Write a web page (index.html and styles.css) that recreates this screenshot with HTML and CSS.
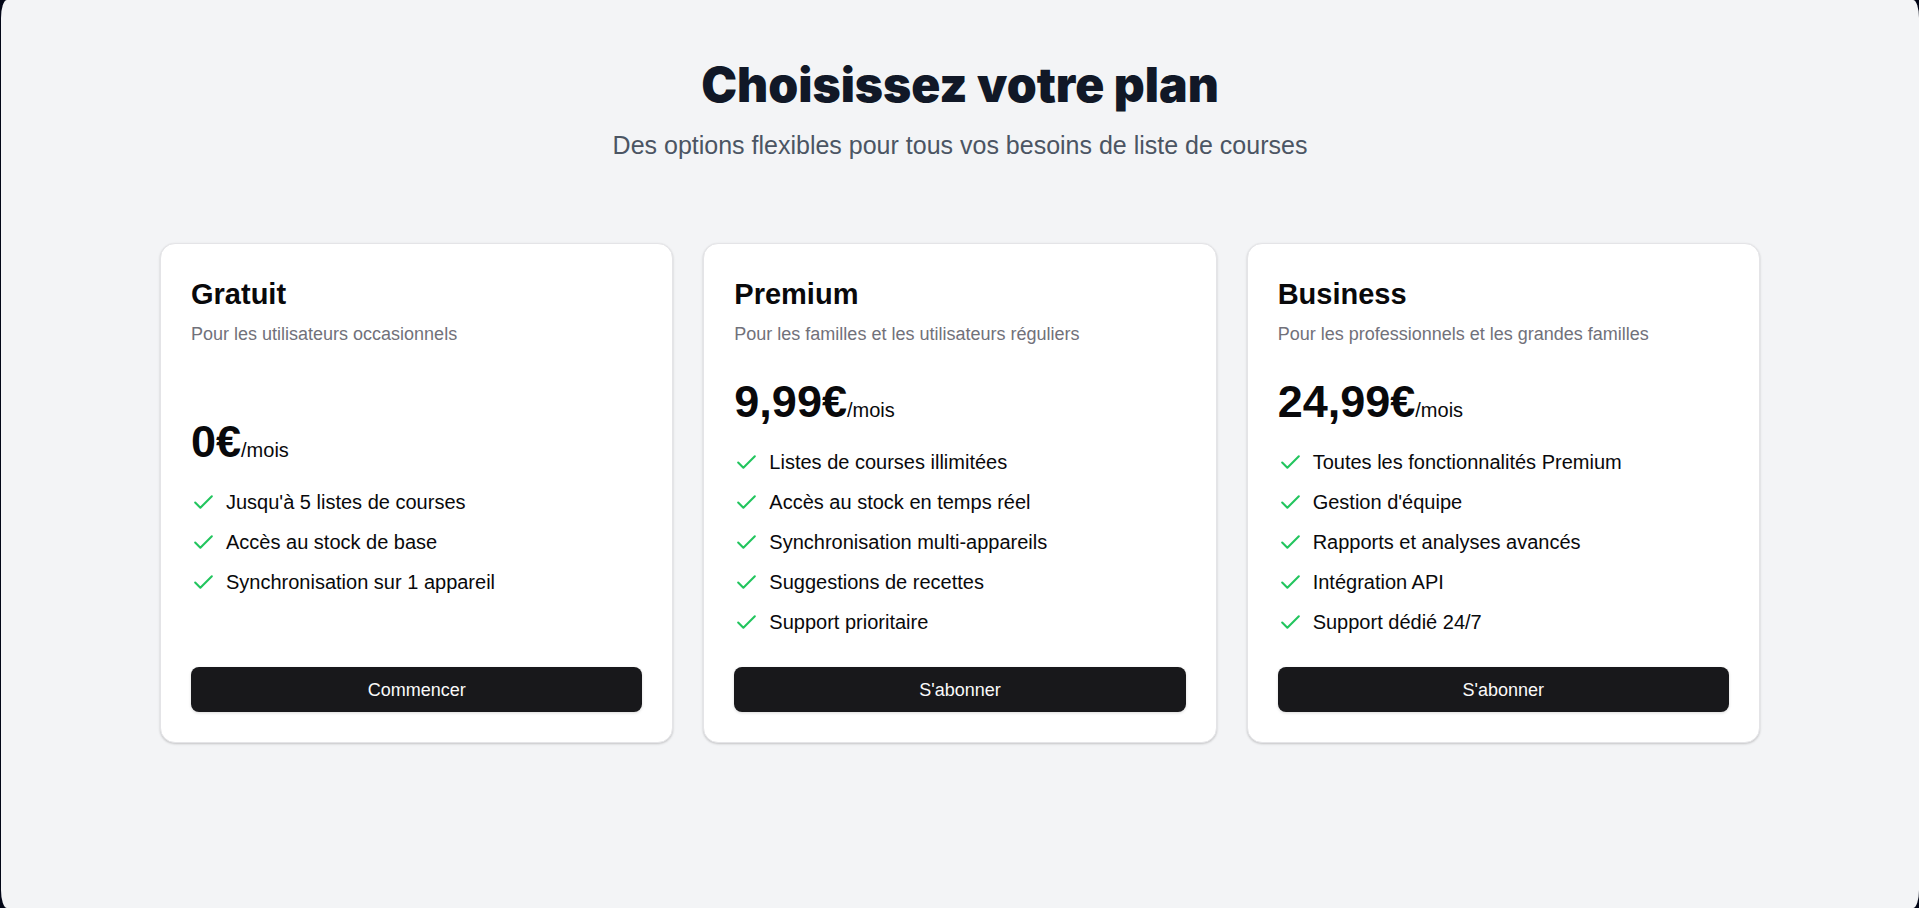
FILE: index.html
```html
<!DOCTYPE html>
<html lang="fr">
<head>
<meta charset="utf-8">
<meta name="viewport" content="width=device-width, initial-scale=1">
<title>Choisissez votre plan</title>
<link rel="stylesheet" href="styles.css">
</head>
<body>
<svg class="sprite" aria-hidden="true"><symbol id="check" viewBox="0 0 24 24"><path d="M20 6 9 17l-5-5"/></symbol></svg>
<main class="page">
  <div class="container">
    <header class="intro">
      <h1 class="title">Choisissez votre plan</h1>
      <p class="subtitle">Des options flexibles pour tous vos besoins de liste de courses</p>
    </header>
    <div class="plans">
      <section class="card">
        <div class="card-head"><h2 class="name">Gratuit</h2><p class="desc">Pour les utilisateurs occasionnels</p></div>
        <div class="card-body">
          <p class="price"><span class="amount">0€</span><span>/mois</span></p>
          <ul class="features">
            <li><svg class="icon"><use href="#check"/></svg>Jusqu'à 5 listes de courses</li>
            <li><svg class="icon"><use href="#check"/></svg>Accès au stock de base</li>
            <li><svg class="icon"><use href="#check"/></svg>Synchronisation sur 1 appareil</li>
          </ul>
        </div>
        <button class="button" type="button">Commencer</button>
      </section>
      <section class="card">
        <div class="card-head"><h2 class="name">Premium</h2><p class="desc">Pour les familles et les utilisateurs réguliers</p></div>
        <div class="card-body">
          <p class="price"><span class="amount">9,99€</span><span>/mois</span></p>
          <ul class="features">
            <li><svg class="icon"><use href="#check"/></svg>Listes de courses illimitées</li>
            <li><svg class="icon"><use href="#check"/></svg>Accès au stock en temps réel</li>
            <li><svg class="icon"><use href="#check"/></svg>Synchronisation multi-appareils</li>
            <li><svg class="icon"><use href="#check"/></svg>Suggestions de recettes</li>
            <li><svg class="icon"><use href="#check"/></svg>Support prioritaire</li>
          </ul>
        </div>
        <button class="button" type="button">S'abonner</button>
      </section>
      <section class="card">
        <div class="card-head"><h2 class="name">Business</h2><p class="desc">Pour les professionnels et les grandes familles</p></div>
        <div class="card-body">
          <p class="price"><span class="amount">24,99€</span><span>/mois</span></p>
          <ul class="features">
            <li><svg class="icon"><use href="#check"/></svg>Toutes les fonctionnalités Premium</li>
            <li><svg class="icon"><use href="#check"/></svg>Gestion d'équipe</li>
            <li><svg class="icon"><use href="#check"/></svg>Rapports et analyses avancés</li>
            <li><svg class="icon"><use href="#check"/></svg>Intégration API</li>
            <li><svg class="icon"><use href="#check"/></svg>Support dédié 24/7</li>
          </ul>
        </div>
        <button class="button" type="button">S'abonner</button>
      </section>
    </div>
  </div>
</main>
</body>
</html>
```
FILE: styles.css
```css
* { box-sizing: border-box; margin: 0; padding: 0; }
html { background: #020617; }
body { font-family: "Liberation Sans", Arial, sans-serif; font-size: 20px; line-height: 30px; color: #09090b; }
.sprite { display: none; }
.page { min-height: 100vh; margin-left: 1px; padding: 60px 40px; background: #f3f4f6; border-radius: 6px / 18px; }
.container { max-width: 1600px; margin: 0 auto; }
.intro { text-align: center; margin-bottom: 80px; }
.title { font-family: "Arial Black", Inter, sans-serif; font-weight: 900; font-size: 48px; line-height: 50px; color: #111827; }
.subtitle { margin-top: 18px; font-size: 25px; line-height: 35px; color: #4b5563; }
.plans { display: grid; grid-template-columns: repeat(3, 1fr); gap: 30px; }
.card { display: flex; flex-direction: column; justify-content: space-between; padding: 30px; background: #fff; border: 1px solid #e4e4e7; border-radius: 15px; box-shadow: 0 1px 3px rgba(0, 0, 0, 0.1), 0 1px 2px rgba(0, 0, 0, 0.1); }
.name { font-size: 29px; line-height: 40px; }
.desc { margin-top: 8px; font-size: 18px; line-height: 25px; color: #71717a; }
.card-body { margin: 30px 0; }
.amount { font-size: 45px; line-height: 50px; font-weight: 700; }
.features { list-style: none; display: grid; gap: 10px; margin-top: 20px; }
.features li { display: flex; align-items: center; gap: 10px; }
.icon { width: 25px; height: 25px; fill: none; stroke: #22c55e; stroke-width: 2; stroke-linecap: round; stroke-linejoin: round; }
.button { height: 45px; border: 0; border-radius: 8px; background: #18181b; color: #fafafa; font: inherit; font-size: 18px; cursor: pointer; box-shadow: 0 1px 3px rgba(0, 0, 0, 0.15); }
```
